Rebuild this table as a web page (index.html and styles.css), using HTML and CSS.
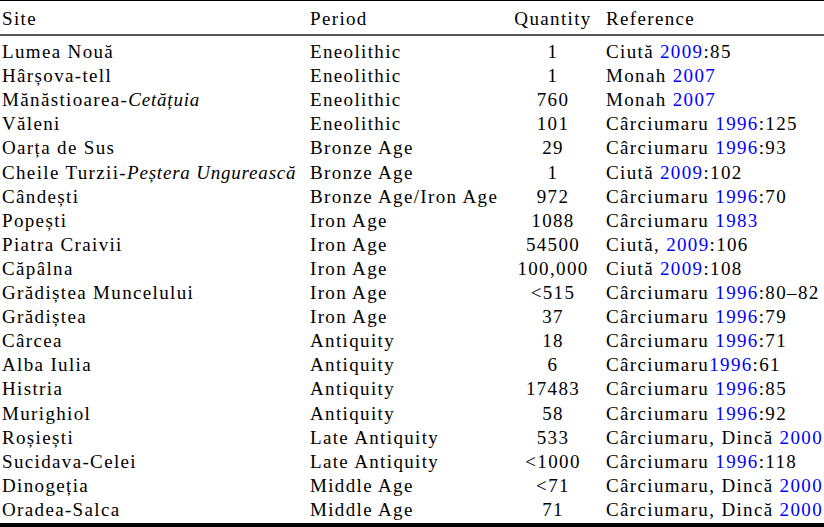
FILE: index.html
```html
<!DOCTYPE html>
<html lang="en">
<head>
<meta charset="utf-8">
<title>Sites</title>
<link rel="stylesheet" href="styles.css">
</head>
<body>
<table class="data">
  <colgroup>
    <col class="c-site">
    <col class="c-period">
    <col class="c-qty">
    <col class="c-ref">
  </colgroup>
  <thead>
    <tr><th class="site">Site</th><th>Period</th><th class="qty">Quantity</th><th class="ref">Reference</th></tr>
  </thead>
  <tbody>
    <tr class="first"><td class="site">Lumea Nouă</td><td>Eneolithic</td><td class="qty">1</td><td class="ref">Ciută <span class="lk">2009</span>:85</td></tr>
    <tr><td class="site">Hârșova-tell</td><td>Eneolithic</td><td class="qty">1</td><td class="ref">Monah <span class="lk">2007</span></td></tr>
    <tr><td class="site">Mănăstioarea-<i>Cetățuia</i></td><td>Eneolithic</td><td class="qty">760</td><td class="ref">Monah <span class="lk">2007</span></td></tr>
    <tr><td class="site">Văleni</td><td>Eneolithic</td><td class="qty">101</td><td class="ref">Cârciumaru <span class="lk">1996</span>:125</td></tr>
    <tr><td class="site">Oarța de Sus</td><td>Bronze Age</td><td class="qty">29</td><td class="ref">Cârciumaru <span class="lk">1996</span>:93</td></tr>
    <tr><td class="site">Cheile Turzii-<i>Peștera Ungurească</i></td><td>Bronze Age</td><td class="qty">1</td><td class="ref">Ciută <span class="lk">2009</span>:102</td></tr>
    <tr><td class="site">Cândești</td><td>Bronze Age/Iron Age</td><td class="qty">972</td><td class="ref">Cârciumaru <span class="lk">1996</span>:70</td></tr>
    <tr><td class="site">Popești</td><td>Iron Age</td><td class="qty">1088</td><td class="ref">Cârciumaru <span class="lk">1983</span></td></tr>
    <tr><td class="site">Piatra Craivii</td><td>Iron Age</td><td class="qty">54500</td><td class="ref">Ciută, <span class="lk">2009</span>:106</td></tr>
    <tr><td class="site">Căpâlna</td><td>Iron Age</td><td class="qty">100,000</td><td class="ref">Ciută <span class="lk">2009</span>:108</td></tr>
    <tr><td class="site">Grădiștea Muncelului</td><td>Iron Age</td><td class="qty">&lt;515</td><td class="ref">Cârciumaru <span class="lk">1996</span>:80–82</td></tr>
    <tr><td class="site">Grădiștea</td><td>Iron Age</td><td class="qty">37</td><td class="ref">Cârciumaru <span class="lk">1996</span>:79</td></tr>
    <tr><td class="site">Cârcea</td><td>Antiquity</td><td class="qty">18</td><td class="ref">Cârciumaru <span class="lk">1996</span>:71</td></tr>
    <tr><td class="site">Alba Iulia</td><td>Antiquity</td><td class="qty">6</td><td class="ref">Cârciumaru<span class="lk">1996</span>:61</td></tr>
    <tr><td class="site">Histria</td><td>Antiquity</td><td class="qty">17483</td><td class="ref">Cârciumaru <span class="lk">1996</span>:85</td></tr>
    <tr><td class="site">Murighiol</td><td>Antiquity</td><td class="qty">58</td><td class="ref">Cârciumaru <span class="lk">1996</span>:92</td></tr>
    <tr><td class="site">Roșiești</td><td>Late Antiquity</td><td class="qty">533</td><td class="ref">Cârciumaru, Dincă <span class="lk">2000</span></td></tr>
    <tr><td class="site">Sucidava-Celei</td><td>Late Antiquity</td><td class="qty">&lt;1000</td><td class="ref">Cârciumaru <span class="lk">1996</span>:118</td></tr>
    <tr><td class="site">Dinogeția</td><td>Middle Age</td><td class="qty">&lt;71</td><td class="ref">Cârciumaru, Dincă <span class="lk">2000</span></td></tr>
    <tr class="last"><td class="site">Oradea-Salca</td><td>Middle Age</td><td class="qty">71</td><td class="ref">Cârciumaru, Dincă <span class="lk">2000</span></td></tr>
  </tbody>
</table>
</body>
</html>
```

FILE: styles.css
```css
html, body {
  margin: 0;
  padding: 0;
  background: #ffffff;
}

body {
  font-family: "Liberation Serif", "Times New Roman", serif;
  font-size: 19px;
  letter-spacing: 1.35px;
  color: #000000;
}

.data {
  width: 824px;
  table-layout: fixed;
  border-collapse: collapse;
  border-top: 1px solid #000000;
  border-bottom: 4px solid #000000;
}

.c-site { width: 310px; }
.c-period { width: 202px; }
.c-qty { width: 82px; }
.c-ref { width: 230px; }

.data th,
.data td {
  padding: 0;
  font-weight: normal;
  text-align: left;
  line-height: 24.1px;
  white-space: nowrap;
  vertical-align: top;
}

.data i {
  letter-spacing: 0.8px;
}

.data thead th {
  padding-top: 6px;
  padding-bottom: 3px;
  border-bottom: 2px solid #555555;
}

.data .site { padding-left: 2px; }
.data .qty { text-align: center; }
.data .ref { padding-left: 12px; }

.data tr.first td { padding-top: 4px; }
.data tr.last td { padding-bottom: 1px; }

.lk { color: #0000ff; }
```
